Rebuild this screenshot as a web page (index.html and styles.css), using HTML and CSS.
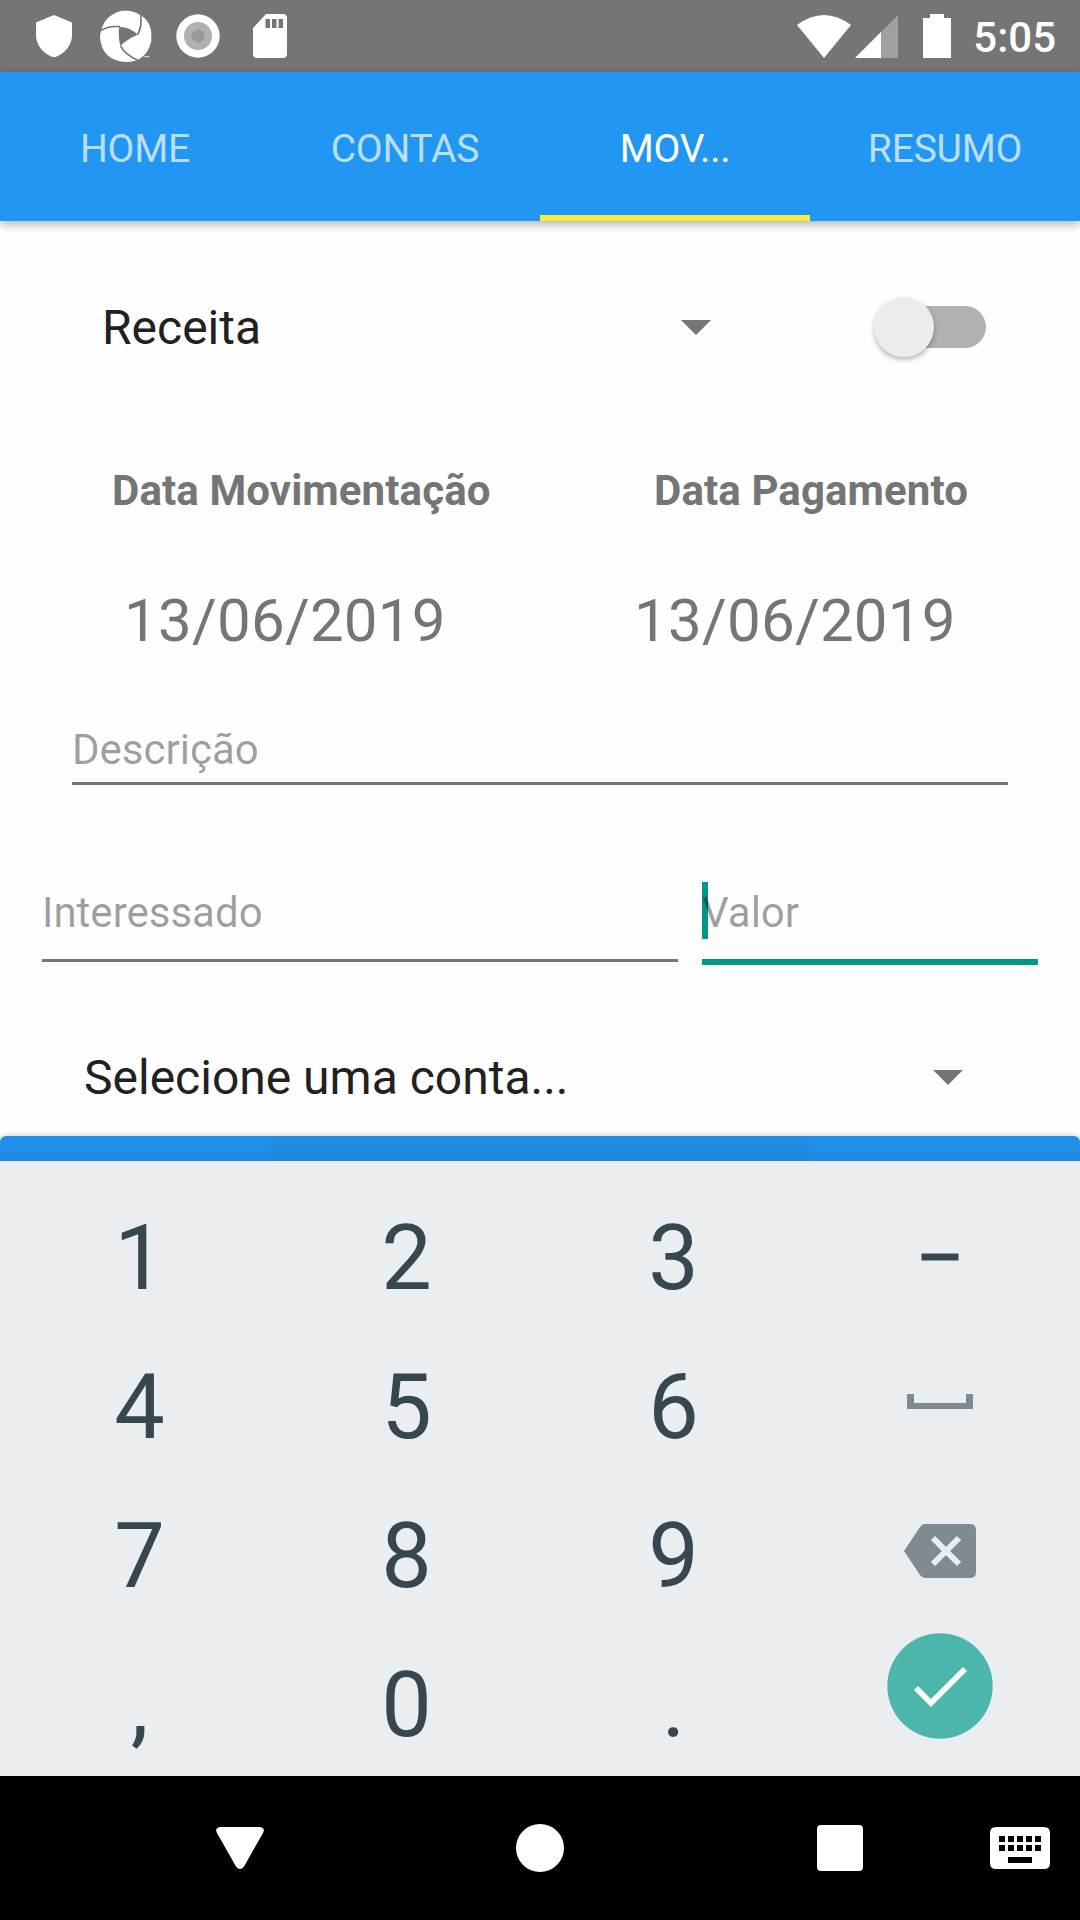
FILE: index.html
```html
<!DOCTYPE html>
<html lang="pt-BR">
<head>
<meta charset="utf-8">
<title>Movimentação</title>
<link rel="stylesheet" href="styles.css">
</head>
<body>
<div class="screen">
  <header class="status">
    <div class="status-left">
      <svg class="shield" width="36" height="42" viewBox="0 0 36 42"><path d="M18 0 36 7.5V20C36 30.500 28 39.500 18 42.500 8 39.500 0 30.500 0 20V7.500Z"/></svg>
      <svg class="swirl" width="66" height="66" viewBox="0 0 198 198">
        <path d="M90 20H112Q178 36 178 92V110Q164 174 101 174Q28 168 24 98Q30 34 90 20Z"/>
        <g class="cut">
          <path class="hole" d="M82 68Q116 70 137 92Q108 104 85 125Q77 96 82 68Z"/>
          <path d="M25 80Q50 65 84 68M137 92Q151 68 146 30M85 125Q100 153 136 168"/>
        </g>
        <path d="M158 156h5v4h-5zM166 156h5v4h-5z"/>
      </svg>
      <svg class="disc" width="44" height="44" viewBox="0 0 44 44"><circle cx="22" cy="22" r="21.700"/><circle class="ring" cx="22" cy="22" r="14"/><circle class="dot" cx="22" cy="22" r="6.500"/></svg>
      <svg class="card" width="34" height="44" viewBox="0 0 34 44"><path fill-rule="evenodd" d="M13 0H30Q34 0 34 4V40Q34 44 30 44H4Q0 44 0 40V14ZM12.500 5V14H17V5ZM19 5V14H23.500V5ZM25.500 5V14H30V5Z"/></svg>
    </div>
    <div class="status-right">
      <svg class="wifi" width="54" height="43" viewBox="0 0 54 43"><path d="M0 10Q27-10 54 10L27 43Z"/></svg>
      <svg class="signal" width="43" height="43" viewBox="0 0 43 43"><path class="faint" d="M43 0V43H0Z"/><path d="M26 17V43H0Z"/></svg>
      <svg class="battery" width="28" height="44" viewBox="0 0 28 44"><path d="M7 0H21V4H28V44H0V4H7Z"/></svg>
      <span class="time">5:05</span>
    </div>
  </header>

  <nav class="tabs">
    <div class="tab">HOME</div>
    <div class="tab">CONTAS</div>
    <div class="tab active">MOV...</div>
    <div class="tab">RESUMO</div>
  </nav>

  <main class="form">
    <div class="type-row">
      <span>Receita</span>
      <svg class="caret" width="30" height="15" viewBox="0 0 30 15"><path d="M0 0H30L15 15Z"/></svg>
      <div class="switch"><div class="thumb"></div></div>
    </div>
    <div class="label-row"><span>Data Movimentação</span><span>Data Pagamento</span></div>
    <div class="date-row"><span>13/06/2019</span><span>13/06/2019</span></div>
    <div class="field description">Descrição</div>
    <div class="field-row">
      <div class="field">Interessado</div>
      <div class="field focused"><span class="cursor"></span><span class="hint">Valor</span></div>
    </div>
    <div class="account-row">
      <span>Selecione uma conta...</span>
      <svg class="caret" width="30" height="15" viewBox="0 0 30 15"><path d="M0 0H30L15 15Z"/></svg>
    </div>
    <div class="submit"></div>
  </main>

  <section class="keyboard">
    <div>1</div><div>2</div><div>3</div>
    <div class="action"><svg class="minus" width="38" height="8" viewBox="0 0 38 8"><path d="M.5 .5H37.500V7.500H.5Z"/></svg></div>
    <div>4</div><div>5</div><div>6</div>
    <div class="action"><svg class="muted space" width="66" height="15" viewBox="0 0 66 15"><path d="M0 0H7V9H59V0H66V15H0Z"/></svg></div>
    <div>7</div><div>8</div><div>9</div>
    <div class="action"><svg class="muted erase" width="72" height="54" viewBox="0 0 72 54"><path d="M0 27 16 3Q18 0 21 0H66Q72 0 72 6V48Q72 54 66 54H21Q18 54 16 51Z"/><path class="cross" d="M29 14 55 40M55 14 29 40"/></svg></div>
    <div>,</div><div>0</div><div>.</div>
    <div class="action"><svg class="done" width="106" height="106" viewBox="0 0 106 106"><circle cx="53" cy="53" r="52.700"/><path d="M29 55 44 70 78 36"/></svg></div>
  </section>

  <footer class="navbar">
    <svg class="back" width="48" height="42" viewBox="0 0 48 42"><path d="M4 0H44Q49.500 1 47 6L28 39.500Q24 44.500 20 39.500L1 6Q-1.500 1 4 0Z"/></svg>
    <svg class="home" width="48" height="48" viewBox="0 0 48 48"><circle cx="24" cy="24" r="24"/></svg>
    <svg class="recent" width="46" height="46" viewBox="0 0 46 46"><rect width="46" height="46" rx="4"/></svg>
    <svg class="ime" width="60" height="42" viewBox="0 0 60 42"><path fill-rule="evenodd" d="M6 0H54Q60 0 60 6V36Q60 42 54 42H6Q0 42 0 36V6Q0 0 6 0ZM9 9v6h6v-6zM18 9v6h6v-6zM27 9v6h6v-6zM36 9v6h6v-6zM45 9v6h6v-6zM9 18v6h6v-6zM18 18v6h6v-6zM27 18v6h6v-6zM36 18v6h6v-6zM45 18v6h6v-6zM18 30v6h24v-6z"/></svg>
  </footer>
</div>
</body>
</html>
```
FILE: styles.css
```css
* { box-sizing: border-box; }
body { margin: 0; font-family: Roboto, sans-serif; }
svg { display: block; flex: none; }
.screen { width: 1080px; height: 1920px; overflow: hidden; background: #fefefe; display: flex; flex-direction: column; }

.status { height: 72px; flex: none; background: #757575; display: flex; justify-content: space-between; align-items: center; padding: 0 24px 0 36px; color: #fff; }
.status svg { fill: #fff; }
.status-left, .status-right { display: flex; align-items: center; }
.swirl { margin: 2px 0 0 20px; }
.cut { stroke: #757575; stroke-width: 5; fill: none; }
.cut .hole { fill: #757575; stroke: none; }
.disc { margin-left: 18px; }
.disc .ring { fill: #b0b0b0; }
.disc .dot { fill: #999; }
.card { margin-left: 33px; }
.signal { margin-left: 4px; }
.signal .faint { fill: #a0a0a0; }
.battery { margin-left: 25px; }
.time { margin: 2px 0 0 22px; font-size: 42px; font-weight: 500; }

.tabs { height: 149px; flex: none; background: #2196f3; display: grid; grid-template-columns: repeat(4, 1fr); box-shadow: 0 3px 10px rgba(0, 0, 0, .32); z-index: 1; }
.tab { display: flex; align-items: center; justify-content: center; padding-top: 5px; font-size: 39px; letter-spacing: -.2px; color: #bbdefb; }
.tab.active { color: #fff; padding-top: 11px; border-bottom: 6px solid #ffeb3b; }

.form { height: 940px; flex: none; display: flex; flex-direction: column; color: #757575; }
.caret { fill: #757575; }
.type-row { height: 212px; display: flex; align-items: center; padding: 0 94px 0 102px; font-size: 48px; color: #212121; }
.type-row span { width: 579px; }
.switch { width: 107px; height: 42px; margin: 0 0 0 auto; border-radius: 21px; background: #b1b1b1; }
.thumb { width: 60px; height: 60px; margin: -9px 0 0 -5px; border-radius: 50%; background: #ececec; box-shadow: 0 3px 5px rgba(0, 0, 0, .28); }
.label-row { height: 114px; display: flex; align-items: center; padding-left: 112px; font-size: 42px; font-weight: 700; letter-spacing: .1px; }
.label-row span:first-child { width: 542px; }
.date-row { height: 146px; display: flex; align-items: center; padding-left: 124px; font-size: 60px; letter-spacing: .25px; }
.date-row span:first-child { width: 510px; }
.field { display: flex; align-items: center; height: 96px; border-bottom: 3px solid #757575; font-size: 42px; color: rgba(0, 0, 0, .38); }
.description { height: 68px; margin: 24px 72px 0; }
.field-row { height: 99px; margin: 81px 42px 0; display: grid; grid-template-columns: 636px 336px; gap: 24px; }
.focused { position: relative; height: 99px; border-bottom: 6px solid #009688; }
.cursor { position: absolute; left: 0; top: 16px; width: 6px; height: 57px; background: #009688; }
.hint { position: relative; }
.account-row { height: 114px; margin: 55px 0 2px; display: flex; align-items: center; justify-content: space-between; padding: 0 117px 0 84px; font-size: 48px; color: #212121; }
.submit { height: 25px; border-radius: 6px 6px 0 0; box-shadow: 0 0 6px rgba(0, 0, 0, .25); background: linear-gradient(rgba(0, 0, 0, 0) 40%, rgba(0, 0, 0, .06)), linear-gradient(90deg, #2190ea 271px, #1f8de5 272px, #1f8de5 808px, #2190ea 809px); }

.keyboard { height: 615px; flex: none; z-index: 1; background: #ebeef1; padding: 27px 6px 0; display: grid; grid-template-columns: repeat(4, 267px); grid-template-rows: repeat(4, 141px); row-gap: 8px; font-size: 90px; line-height: 106px; color: #37474f; fill: #37474f; }
.keyboard div { display: flex; align-items: center; justify-content: center; }
.keyboard .action { padding-right: 2px; }
.keyboard .muted { fill: #7f8b91; }
.minus { margin-bottom: 3px; }
.space { margin-bottom: 12px; }
.erase { margin-bottom: 12px; }
.cross { stroke: #ebeef1; stroke-width: 6; }
.done { fill: #4db6ac; margin-bottom: 39px; }
.done path { fill: none; stroke: #fff; stroke-width: 5.600; }

.navbar { height: 144px; background: #000; fill: #fff; display: flex; align-items: center; padding-left: 216px; }
.home { margin-left: 252px; }
.recent { margin-left: 253px; }
.ime { margin-left: 127px; }
```
